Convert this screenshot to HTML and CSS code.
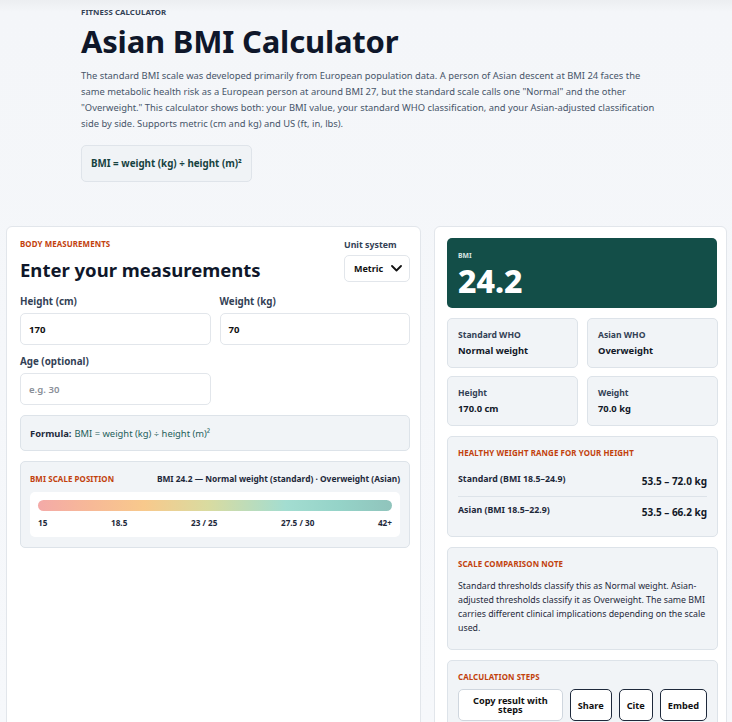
FILE: index.html
```html
<!DOCTYPE html>
<html>
<head>
<meta charset="utf-8">
<link rel="stylesheet" href="styles.css">
</head>
<body>
<header class="hero">
  <div class="eyebrow">FITNESS CALCULATOR</div>
  <h1 class="title">Asian BMI Calculator</h1>
  <p class="intro">The standard BMI scale was developed primarily from European population data. A person of Asian descent at BMI 24 faces the same metabolic health risk as a European person at around BMI 27, but the standard scale calls one "Normal" and the other "Overweight." This calculator shows both: your BMI value, your standard WHO classification, and your Asian-adjusted classification side by side. Supports metric (cm and kg) and US (ft, in, lbs).</p>
  <div class="formula-pill">BMI = weight (kg) ÷ height (m)²</div>
</header>

<main class="layout">
  <section class="card inputs">
    <div class="inputs-head">
      <div>
        <div class="kicker">BODY MEASUREMENTS</div>
        <h2 class="card-title">Enter your measurements</h2>
      </div>
      <div class="unit">
        <div class="unit-label">Unit system</div>
        <div class="select">Metric
          <svg width="11" height="7" viewBox="0 0 11 7"><path d="M1 1l4.5 4.5L10 1" fill="none" stroke="#111" stroke-width="1.8" stroke-linecap="round" stroke-linejoin="round"/></svg>
        </div>
      </div>
    </div>
    <div class="fields">
      <div class="field">
        <label class="field-label">Height (cm)</label>
        <div class="input">170</div>
      </div>
      <div class="field">
        <label class="field-label">Weight (kg)</label>
        <div class="input">70</div>
      </div>
      <div class="field">
        <label class="field-label">Age (optional)</label>
        <div class="input placeholder">e.g. 30</div>
      </div>
    </div>
    <div class="formula-box"><b>Formula:</b> BMI = weight (kg) ÷ height (m)²</div>
    <div class="scale-box">
      <div class="scale-head">
        <div class="kicker">BMI SCALE POSITION</div>
        <div class="scale-summary">BMI 24.2 — Normal weight (standard) · Overweight (Asian)</div>
      </div>
      <div class="scale-inner">
        <div class="bar"></div>
        <div class="ticks"><span>15</span><span>18.5</span><span>23 / 25</span><span>27.5 / 30</span><span>42+</span></div>
      </div>
    </div>
  </section>

  <aside class="card results">
    <div class="bmi-hero">
      <div class="bmi-label">BMI</div>
      <div class="bmi-value">24.2</div>
    </div>
    <div class="stat-grid">
      <div class="stat"><div class="stat-label">Standard WHO</div><div class="stat-value">Normal weight</div></div>
      <div class="stat"><div class="stat-label">Asian WHO</div><div class="stat-value">Overweight</div></div>
      <div class="stat"><div class="stat-label">Height</div><div class="stat-value">170.0 cm</div></div>
      <div class="stat"><div class="stat-label">Weight</div><div class="stat-value">70.0 kg</div></div>
    </div>
    <div class="panel range-panel">
      <div class="kicker">HEALTHY WEIGHT RANGE FOR YOUR HEIGHT</div>
      <div class="ranges">
        <div class="range-row"><span class="range-name">Standard (BMI 18.5–24.9)</span><span class="range-val">53.5 – 72.0 kg</span></div>
        <div class="range-row"><span class="range-name">Asian (BMI 18.5–22.9)</span><span class="range-val">53.5 – 66.2 kg</span></div>
      </div>
    </div>
    <div class="panel note-panel">
      <div class="kicker">SCALE COMPARISON NOTE</div>
      <p class="note">Standard thresholds classify this as Normal weight. Asian-adjusted thresholds classify it as Overweight. The same BMI carries different clinical implications depending on the scale used.</p>
    </div>
    <div class="panel">
      <div class="kicker">CALCULATION STEPS</div>
      <div class="actions">
        <button class="btn btn-light">Copy result with steps</button>
        <button class="btn">Share</button>
        <button class="btn">Cite</button>
        <button class="btn">Embed</button>
      </div>
    </div>
  </aside>
</main>
</body>
</html>
```

FILE: styles.css
```css
* { box-sizing: border-box; }
html, body { margin: 0; padding: 0; }
body {
  font-family: "Noto Sans", "Open Sans", sans-serif;
  background: linear-gradient(#eceef1 0, #f4f6f9 12px, #f6f8fb 100%);
  color: #0f172a;
  height: 722px;
  overflow: hidden;
}
.hero {
  padding: 7px 60px 0 81px;
}
.eyebrow {
  font-size: 7.8px;
  font-weight: 700;
  color: #334155;
  letter-spacing: 0.1px;
}
.title {
  margin: 6px 0 0;
  font-size: 31px;
  line-height: 36px;
  font-weight: 700;
  color: #0f172a;
  letter-spacing: -0.2px;
}
.intro {
  margin: 9px 0 0;
  font-size: 9.4px;
  line-height: 16px;
  color: #475569;
  max-width: 585px;
}
.formula-pill {
  display: inline-block;
  margin-top: 13px;
  padding: 11px 9px;
  border: 1px solid #dfe4ea;
  border-radius: 5px;
  background: #f0f3f6;
  color: #16423f;
  font-size: 9.8px;
  font-weight: 700;
}
.layout {
  display: grid;
  grid-template-columns: 415px 293px;
  gap: 13px;
  padding: 44px 0 0 6px;
}
.card {
  background: #fff;
  border: 1px solid #e2e6eb;
  border-radius: 6px;
  min-height: 520px;
}
.inputs { padding: 12px 10px 14px 13px; }
.inputs-head {
  display: flex;
  justify-content: space-between;
  align-items: flex-start;
}
.kicker {
  font-size: 7.9px;
  font-weight: 700;
  color: #c2410c;
  letter-spacing: 0.1px;
}
.card-title {
  margin: 9px 0 0;
  font-size: 18.5px;
  line-height: 24px;
  font-weight: 700;
  color: #0f172a;
}
.unit { display: flex; flex-direction: column; gap: 4px; }
.unit-label { font-size: 8.8px; font-weight: 700; color: #334155; }
.select {
  width: 66px;
  height: 27px;
  border: 1px solid #e2e6eb;
  border-radius: 5px;
  display: flex;
  align-items: center;
  justify-content: space-between;
  padding: 0 7px 0 9px;
  font-size: 9px;
  font-weight: 700;
  color: #111;
}
.fields {
  display: grid;
  grid-template-columns: 1fr 1fr;
  column-gap: 9px;
  row-gap: 10px;
  margin-top: 13px;
}
.field { display: flex; flex-direction: column; gap: 5px; }
.field-label { font-size: 9.8px; font-weight: 700; color: #334155; }
.input {
  height: 32px;
  border: 1px solid #e2e6eb;
  border-radius: 5px;
  display: flex;
  align-items: center;
  padding: 0 8px;
  font-size: 9.6px;
  font-weight: 700;
  color: #111;
}
.input.placeholder { color: #8a8f98; font-weight: 600; }
.formula-box {
  margin-top: 10px;
  height: 36px;
  display: flex;
  align-items: center;
  gap: 3px;
  padding: 0 9px;
  background: #f1f4f7;
  border: 1px solid #dde3e9;
  border-radius: 5px;
  font-size: 9.4px;
  color: #1f5f5b;
}
.formula-box b { color: #1e293b; }
.scale-box {
  margin-top: 10px;
  padding: 11px 9px 10px;
  background: #f1f4f7;
  border: 1px solid #dde3e9;
  border-radius: 5px;
}
.scale-head { display: flex; justify-content: space-between; align-items: center; }
.scale-summary { font-size: 8.4px; font-weight: 700; color: #1e293b; }
.scale-inner {
  margin-top: 8px;
  background: #fff;
  border-radius: 5px;
  padding: 8px 8px 9px;
}
.bar {
  height: 11px;
  border-radius: 6px;
  background: linear-gradient(90deg, #f4aaa8 0%, #f7b997 15%, #f8c98c 30%, #d9dba0 48%, #a3ddd1 70%, #95d3c8 85%, #90c4bc 100%);
}
.ticks {
  display: flex;
  justify-content: space-between;
  margin-top: 6px;
  font-size: 8.2px;
  font-weight: 700;
  color: #1e293b;
}
.results { padding: 11px 9px 0 12px; }
.bmi-hero {
  background: #134e48;
  border-radius: 5px;
  height: 70px;
  padding: 13px 11px 0;
  color: #fff;
}
.bmi-label { font-size: 6.8px; line-height: 9px; font-weight: 700; color: #d9e6e4; }
.bmi-value { font-size: 32px; line-height: 26px; font-weight: 800; margin-top: 8px; }
.stat-grid {
  display: grid;
  grid-template-columns: 131px 131px;
  gap: 8px 9px;
  margin-top: 10px;
}
.stat {
  height: 50px;
  background: #f1f4f7;
  border: 1px solid #dde3e9;
  border-radius: 5px;
  padding: 10px 10px 0;
}
.stat-label { font-size: 8.6px; font-weight: 700; color: #334155; }
.stat-value { font-size: 9.4px; font-weight: 700; color: #111827; margin-top: 3px; }
.panel {
  margin-top: 10px;
  width: 271px;
  background: #f1f4f7;
  border: 1px solid #dde3e9;
  border-radius: 5px;
  padding: 11px 10px 12px;
}
.range-panel { padding-bottom: 9px; }
.ranges { margin-top: 8px; }
.range-row {
  display: flex;
  justify-content: space-between;
  align-items: center;
  height: 30px;
}
.range-row + .range-row { border-top: 1px solid #dde3e9; height: 31px; }
.range-name { font-size: 8.8px; font-weight: 700; color: #1e293b; margin-top: -4px; }
.range-val { font-size: 10px; font-weight: 700; color: #111827; }
.note-panel { padding-bottom: 14px; }
.note {
  margin: 10px 0 0;
  font-size: 8.8px;
  line-height: 14px;
  color: #1e293b;
}
.actions {
  display: flex;
  gap: 7px;
  margin-top: 7px;
}
.btn {
  font-family: inherit;
  background: #fff;
  border: 1.5px solid #1e293b;
  border-radius: 5px;
  height: 32px;
  padding: 0 7px;
  font-size: 9.2px;
  font-weight: 700;
  color: #111;
  line-height: 9px;
}
.btn-light {
  border: 1px solid #cfd6de;
  width: 105px;
}
```
